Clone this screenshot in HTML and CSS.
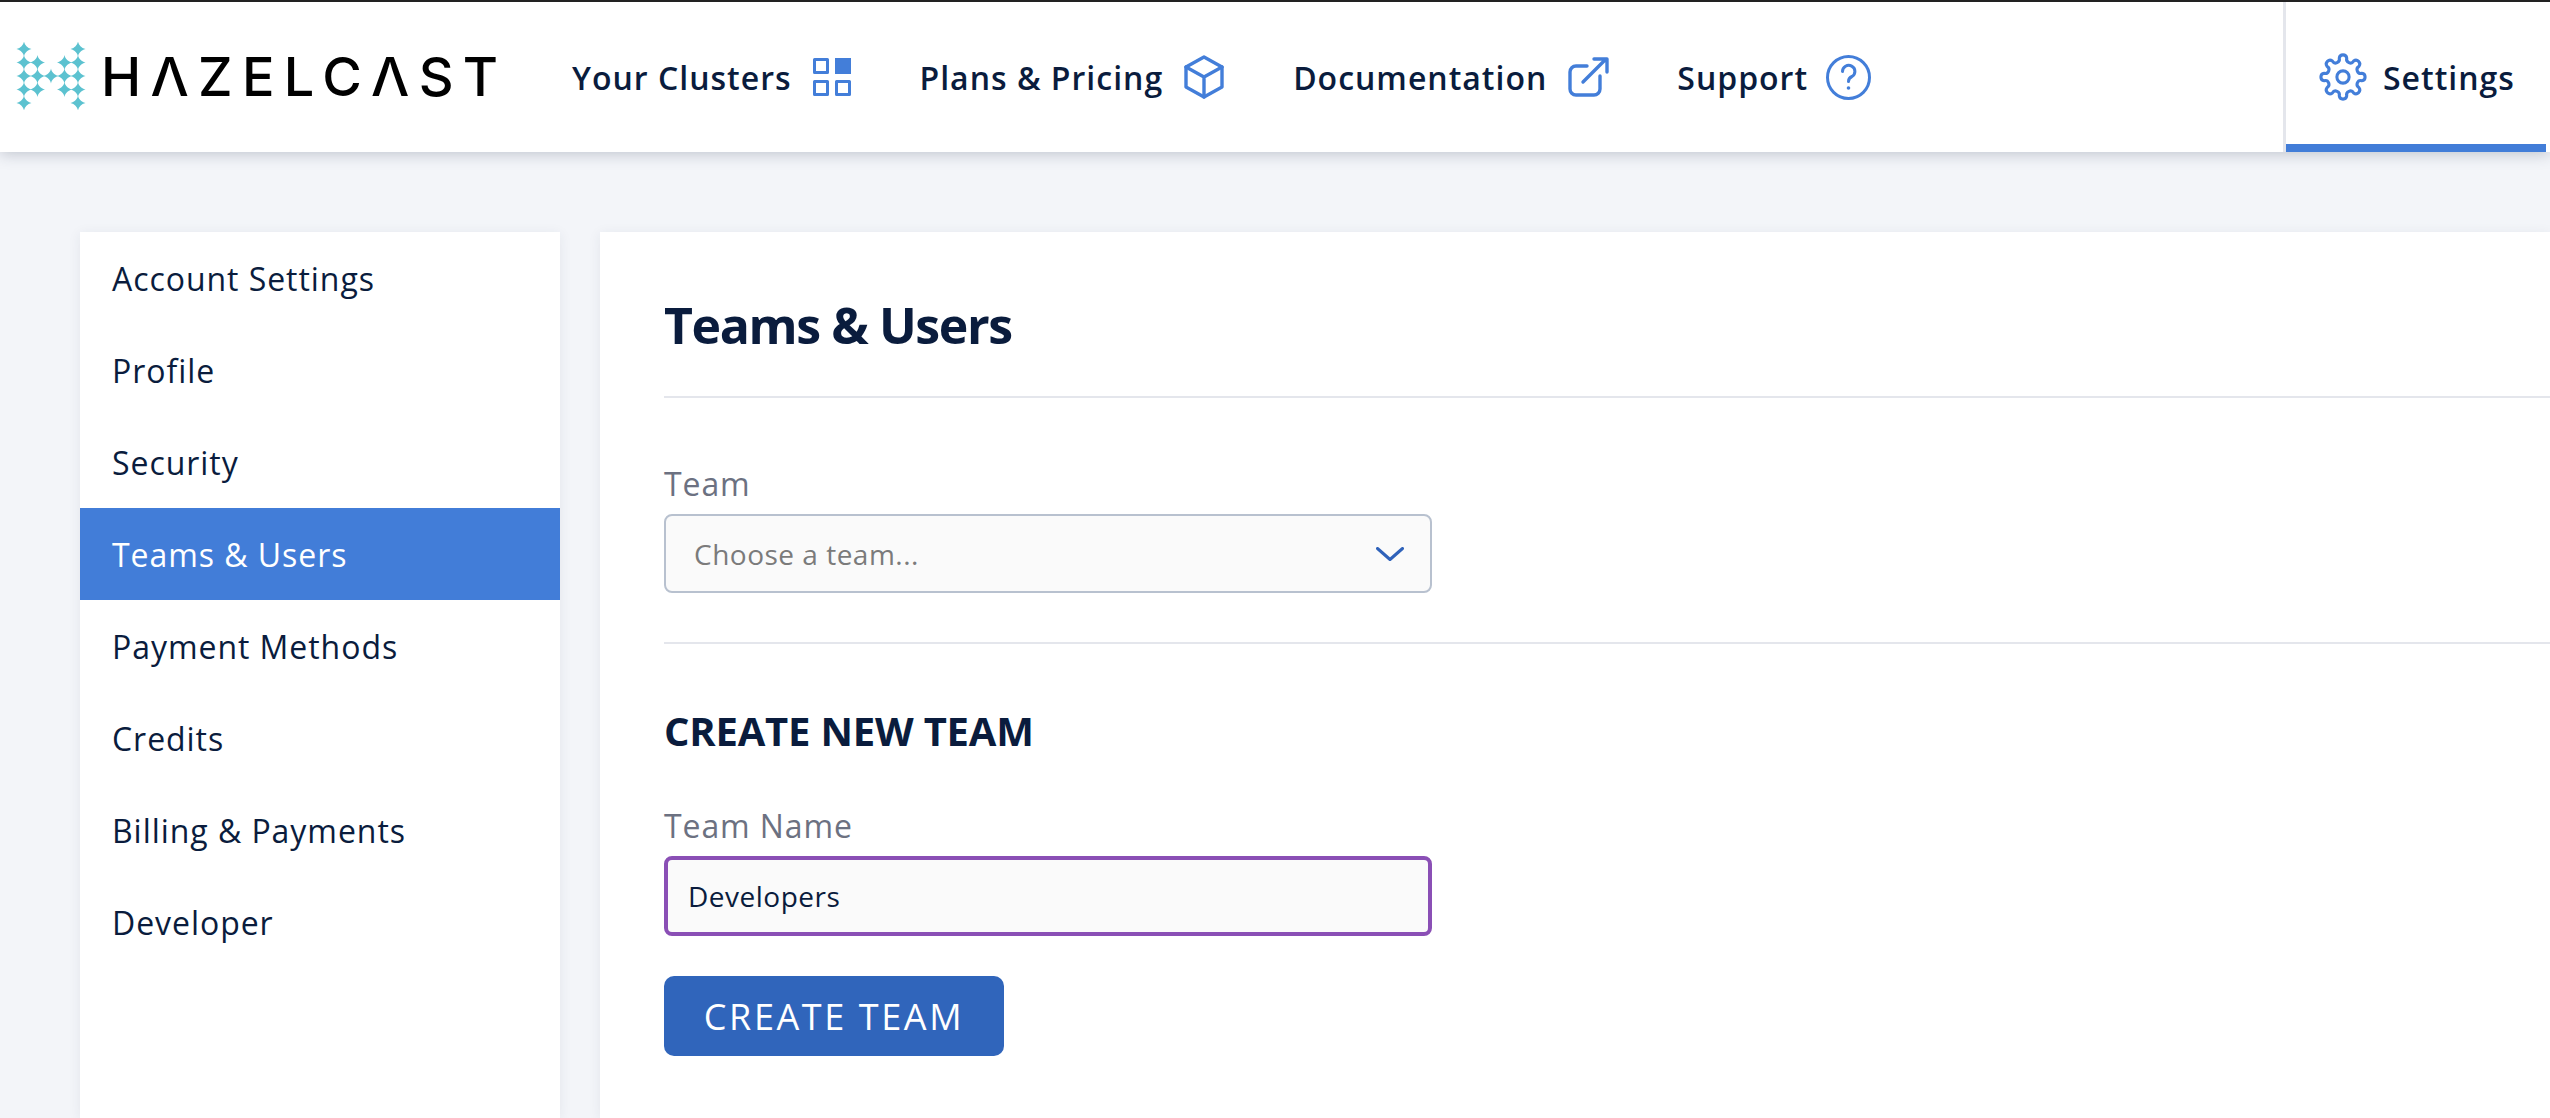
FILE: index.html
```html
<!DOCTYPE html>
<html lang="en">
<head>
<meta charset="utf-8">
<title>Teams &amp; Users</title>
<link rel="stylesheet" href="styles.css">
</head>
<body>
<header class="topbar">
  <a class="logo" aria-label="HAZELCAST">
    <svg class="logo-mark" width="70" height="68" viewBox="0 0 70 68">
      <defs><path id="star" d="M0-7.5C.6-4 3-1.2 7.5 0 3 1.2.6 4 0 7.5-.6 4-3 1.2-7.5 0-3-1.2-.6-4 0-7.5Z"/></defs>
      <g fill="#5cc2d0">
        <use href="#star" x="8" y="7"/><use href="#star" x="8" y="20.5"/><use href="#star" x="8" y="34"/><use href="#star" x="8" y="47.5"/><use href="#star" x="8" y="61"/>
        <use href="#star" x="21.5" y="20.5"/><use href="#star" x="21.5" y="34"/><use href="#star" x="21.5" y="47.5"/>
        <use href="#star" x="35" y="34"/>
        <use href="#star" x="48.5" y="20.5"/><use href="#star" x="48.5" y="34"/><use href="#star" x="48.5" y="47.5"/>
        <use href="#star" x="62" y="7"/><use href="#star" x="62" y="20.5"/><use href="#star" x="62" y="34"/><use href="#star" x="62" y="47.5"/><use href="#star" x="62" y="61"/>
      </g>
    </svg>
    <span class="logo-word">HΛZELCΛST</span>
  </a>
  <nav class="nav">
    <a class="nav-item">Your Clusters
      <svg class="icon thin" width="38" height="38" viewBox="0 0 38 38"><rect x="1.5" y="1.5" width="13" height="13"/><rect class="solid" x="22" y="0" width="16" height="16"/><rect x="1.5" y="23.5" width="13" height="13"/><rect x="23.5" y="23.5" width="13" height="13"/></svg>
    </a>
    <a class="nav-item">Plans &amp; Pricing
      <svg class="icon" width="40" height="44" viewBox="0 0 40 44"><path d="M20 2 38 12V32L20 42 2 32V12Z"/><path d="M2 12 20 22 38 12M20 22V42"/></svg>
    </a>
    <a class="nav-item">Documentation
      <svg class="icon" width="42" height="42" viewBox="0 0 42 42"><path d="M19 10H8a6 6 0 0 0-6 6V33a6 6 0 0 0 6 6H26a6 6 0 0 0 6-6V20"/><path d="M15 26 38 3M26 3H39V16"/></svg>
    </a>
    <a class="nav-item support">Support
      <svg class="icon thin" width="45" height="45" viewBox="0 0 45 45"><circle cx="22.5" cy="22.5" r="21"/><path d="M16.5 16.5a6.2 6 0 1 1 9.5 5q-3.5 1.5-3.5 5"/><circle class="solid" cx="22.5" cy="33" r="1.8"/></svg>
    </a>
  </nav>
  <a class="settings-tab">
    <svg class="icon gear" width="48" height="48" viewBox="0 0 48 48"><g transform="translate(24 24) scale(1.02)"><path d="M-3.67-18.44A3.7 3.7 0 0 1 3.67-18.44 3.7 3.7 0 0 0 10.45-15.63 3.7 3.7 0 0 1 15.63-10.45 3.7 3.7 0 0 0 18.44-3.67 3.7 3.7 0 0 1 18.44 3.67 3.7 3.7 0 0 0 15.63 10.45 3.7 3.7 0 0 1 10.45 15.63 3.7 3.7 0 0 0 3.67 18.44 3.7 3.7 0 0 1-3.67 18.44 3.7 3.7 0 0 0-10.45 15.63 3.7 3.7 0 0 1-15.63 10.45 3.7 3.7 0 0 0-18.44 3.67 3.7 3.7 0 0 1-18.44-3.67 3.7 3.7 0 0 0-15.63-10.45 3.7 3.7 0 0 1-10.45-15.63 3.7 3.7 0 0 0-3.67-18.44Z"/><circle r="6"/></g></svg>
    Settings
  </a>
</header>
<div class="page">
  <aside class="sidebar">
    <a class="side-item">Account Settings</a>
    <a class="side-item">Profile</a>
    <a class="side-item">Security</a>
    <a class="side-item active">Teams &amp; Users</a>
    <a class="side-item">Payment Methods</a>
    <a class="side-item">Credits</a>
    <a class="side-item">Billing &amp; Payments</a>
    <a class="side-item">Developer</a>
  </aside>
  <main class="panel">
    <h1 class="title">Teams &amp; Users</h1>
    <section class="section first">
      <div class="label">Team</div>
      <div class="field select">
        <span class="placeholder">Choose a team...</span>
        <svg class="chevron" width="28" height="14" viewBox="0 0 28 14"><path d="M1.5 1.5 14 12.5 26.5 1.5"/></svg>
      </div>
    </section>
    <section class="section">
      <h2 class="subtitle">CREATE NEW TEAM</h2>
      <div class="label">Team Name</div>
      <div class="field input">Developers</div>
      <button class="button" type="button">CREATE TEAM</button>
    </section>
  </main>
</div>
</body>
</html>
```
FILE: styles.css
```css
* { box-sizing: border-box; }
html, body { height: 100%; }
body {
  margin: 0;
  display: flex;
  flex-direction: column;
  overflow: hidden;
  background: #f3f5f9;
  color: #0a1c3d;
  font-family: "Open Sans", sans-serif;
  font-size: 32px;
}
.topbar {
  flex: none;
  height: 152px;
  display: flex;
  align-items: stretch;
  padding: 0 4px 0 16px;
  background: #fff;
  border-top: 2px solid #222;
  box-shadow: 0 2px 14px rgba(40, 50, 80, .25);
  position: relative;
  z-index: 2;
}
.logo { display: flex; align-items: center; gap: 15px; width: 556px; flex: none; }
.logo-mark { flex: none; margin-top: -2px; }
.logo-word {
  font-family: "Inter", sans-serif;
  font-size: 54px;
  font-weight: 500;
  letter-spacing: 9.3px;
  color: #000;
  line-height: 1;
}
.nav { display: flex; align-items: center; gap: 69px; }
.nav-item, .settings-tab { display: flex; align-items: center; font-weight: 600; letter-spacing: 1px; }
.nav-item { gap: 21px; }
.nav-item.support { margin-left: -2px; gap: 18px; }
.icon { flex: none; fill: none; stroke: #437ed9; stroke-width: 3.4; stroke-linecap: round; stroke-linejoin: round; }
.icon.thin { stroke-width: 3; }
.icon.gear { stroke-width: 3; }
.icon .solid { fill: #437ed9; stroke: none; }
.settings-tab {
  margin-left: auto;
  width: 263px;
  gap: 16px;
  padding-left: 33px;
  border-left: 3px solid #e4e6ec;
  box-shadow: inset 0 -8px 0 #427dd8;
}
.page { flex: 1; display: flex; gap: 40px; padding: 80px 0 0 80px; min-height: 0; }
.sidebar {
  flex: none;
  width: 480px;
  background: #fff;
  box-shadow: 0 2px 12px rgba(40, 50, 80, .08);
}
.side-item { display: flex; align-items: center; height: 92px; padding-left: 32px; letter-spacing: .95px; }
.side-item.active { background: #427dd8; color: #fff; }
.panel {
  flex: 1;
  padding-left: 64px;
  background: #fff;
  box-shadow: 0 2px 12px rgba(40, 50, 80, .08);
}
.title {
  margin: 0;
  height: 166px;
  padding-top: 22px;
  display: flex;
  align-items: center;
  border-bottom: 2px solid #e4e6ec;
  font-size: 50px;
  font-weight: 700;
  letter-spacing: -1.4px;
}
.section { display: flex; flex-direction: column; align-items: flex-start; }
.section.first { padding: 64px 0 49px; border-bottom: 2px solid #e4e6ec; }
.subtitle { margin: 62px 0 48px; height: 50px; line-height: 50px; font-size: 40px; font-weight: 700; letter-spacing: -.2px; }
.label { height: 44px; line-height: 44px; margin-bottom: 8px; color: #6c7181; letter-spacing: .9px; }
.field {
  width: 768px;
  display: flex;
  align-items: center;
  background: #fafafa;
  font-size: 28px;
  letter-spacing: .5px;
}
.select {
  height: 79px;
  justify-content: space-between;
  padding: 0 26px 0 28px;
  border: 2px solid #b8c1cf;
  border-radius: 8px;
}
.placeholder { color: #7b7b7b; }
.chevron { fill: none; stroke: #2f62ba; stroke-width: 3; stroke-linecap: round; stroke-linejoin: round; }
.input {
  height: 80px;
  padding-left: 20px;
  border: 4px solid #8a4fb5;
  border-radius: 8px;
}
.button {
  margin-top: 40px;
  width: 340px;
  height: 80px;
  border: 0;
  border-radius: 10px;
  background: #3065bb;
  color: #fff;
  font-family: inherit;
  font-size: 36px;
  letter-spacing: 2.6px;
}
```
